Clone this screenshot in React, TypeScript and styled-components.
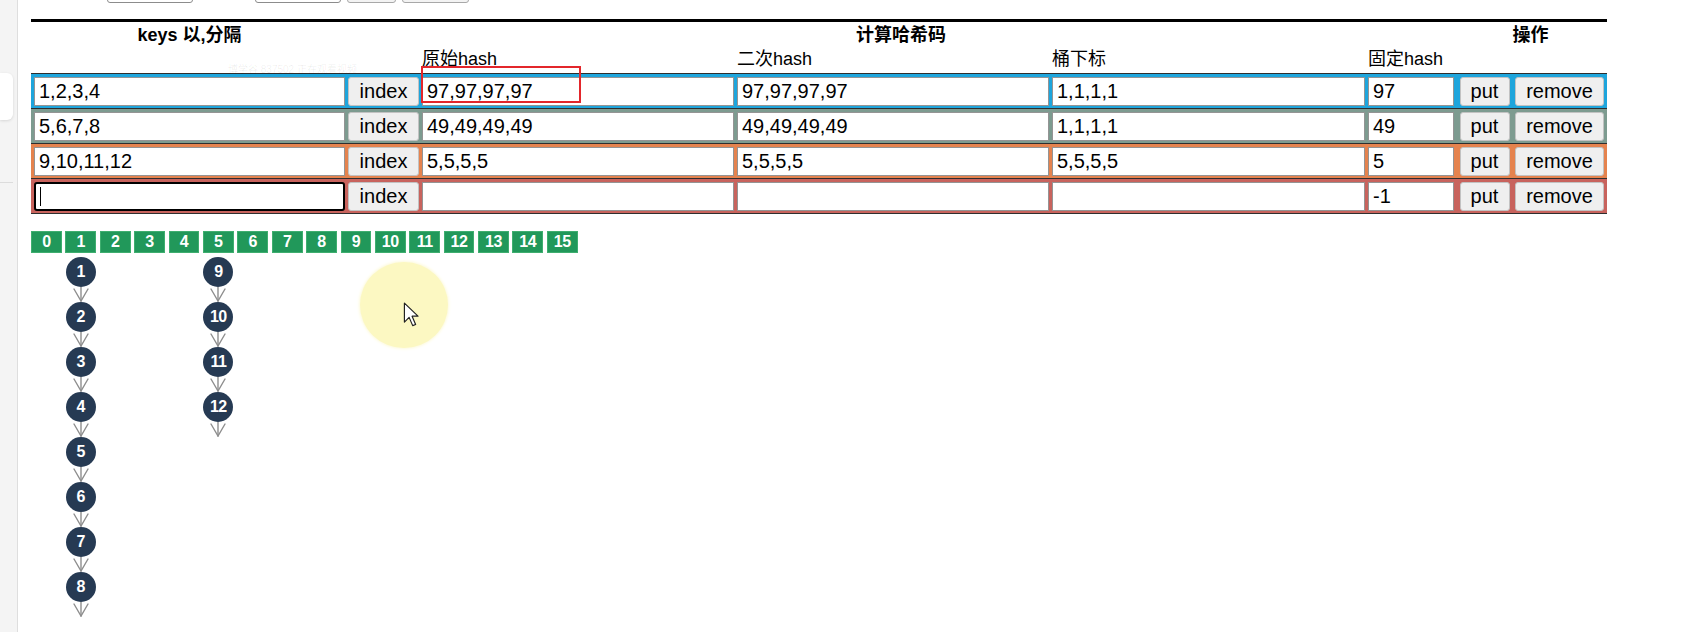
import React from 'react';
import styled, { createGlobalStyle } from 'styled-components';

const GlobalStyle = createGlobalStyle`
  html, body { margin: 0; padding: 0; background: #fff; }
  body {
    font-family: "Liberation Sans", Arial, "Noto Sans CJK SC", sans-serif;
    color: #000;
    overflow: hidden;
  }
  #root { width: 1694px; height: 632px; }
`;

const COLS = '311px 71px 312px 312px 313px 86px 55px 89px';

const Page = styled.div`
  position: relative;
  display: flex;
  width: 1694px;
  height: 632px;
  overflow: hidden;
  background: #fff;
`;

const Sidebar = styled.aside`
  flex: none;
  width: 17px;
  background: #f4f4f4;
  border-right: 1px solid #dedede;
  display: flex;
  flex-direction: column;
  padding-top: 73px;
`;

const SideCard = styled.div`
  width: 13px;
  height: 47px;
  background: #fff;
  border-radius: 0 6px 6px 0;
  box-shadow: 0 1px 3px rgba(0, 0, 0, 0.12);
`;

const SideDivider = styled.div`
  margin-top: 62px;
  width: 13px;
  height: 1px;
  background: #dcdcdc;
`;

const Main = styled.main`
  flex: 1;
  display: flex;
  flex-direction: column;
  padding-left: 13px;
`;

const Toolbar = styled.div`
  height: 3px;
  overflow: hidden;
  display: flex;
  align-items: flex-end;
  gap: 6px;
  padding-left: 76px;
`;

const ToolInput = styled.div<{ $w: number }>`
  flex: none;
  width: ${(p) => p.$w}px;
  height: 22px;
  box-sizing: border-box;
  border: 1px solid #8c8c8c;
  border-radius: 3px;
  background: #fff;
`;

const ToolButton = styled.div<{ $w: number }>`
  flex: none;
  width: ${(p) => p.$w}px;
  height: 22px;
  box-sizing: border-box;
  border: 1px solid #a8a8a8;
  border-radius: 3px;
  background: #f3f3f3;
`;

const ToolLabel = styled.div`
  flex: none;
  width: 50px;
`;

const Table = styled.section`
  margin-top: 16px;
  width: 1576px;
  border-top: 3px solid #000;
  display: flex;
  flex-direction: column;
`;

const HeadRow = styled.div<{ $h: number }>`
  display: grid;
  grid-template-columns: ${COLS};
  column-gap: 3px;
  padding: 0 3px;
  height: ${(p) => p.$h}px;
`;

const GroupTitle = styled.div<{ $col: string }>`
  grid-column: ${(p) => p.$col};
  text-align: center;
  font-size: 18px;
  font-weight: bold;
  line-height: 26px;
`;

const ColLabel = styled.div<{ $col: number }>`
  grid-column: ${(p) => p.$col};
  font-size: 18px;
  line-height: 21px;
  padding-top: 1px;
  white-space: nowrap;
`;

const DataRow = styled.div<{ $color: string; $last?: boolean }>`
  display: grid;
  grid-template-columns: ${COLS};
  column-gap: 3px;
  padding: 3px 3px 2px;
  background: ${(p) => p.$color};
  border-top: 1px solid #2e2e2e;
  border-bottom: ${(p) => (p.$last ? '1px solid #2e2e2e' : 'none')};
  align-items: center;
`;

const FieldWrap = styled.div`
  position: relative;
  height: 29px;
`;

const Field = styled.input<{ $focused?: boolean }>`
  display: block;
  width: 100%;
  height: 29px;
  margin: 0;
  box-sizing: border-box;
  border: ${(p) => (p.$focused ? '2px solid #000' : '1px solid rgba(0,0,0,0.42)')};
  border-radius: ${(p) => (p.$focused ? '3px' : '0')};
  padding: 0 ${(p) => (p.$focused ? '3px' : '4px')};
  background: #fff;
  font-family: "Liberation Sans", Arial, sans-serif;
  font-size: 20px;
  color: #000;
  outline: none;
`;

const Caret = styled.span`
  position: absolute;
  left: 6px;
  top: 5px;
  width: 1px;
  height: 19px;
  background: #000;
`;

const Btn = styled.button<{ $w?: number }>`
  justify-self: center;
  width: ${(p) => (p.$w ? `${p.$w}px` : '100%')};
  height: 29px;
  margin: 0;
  padding: 0;
  box-sizing: border-box;
  background: #efefef;
  border: 1px solid #c2c2c2;
  border-radius: 3px;
  font-family: "Liberation Sans", Arial, sans-serif;
  font-size: 20px;
  color: #000;
`;

const Board = styled.div`
  margin-top: 17px;
  display: flex;
  gap: 3.6px;
  align-items: flex-start;
`;

const BucketColumn = styled.div`
  width: 30.8px;
  display: flex;
  flex-direction: column;
  align-items: center;
`;

const BucketBox = styled.div`
  width: 100%;
  height: 22px;
  box-sizing: border-box;
  background: #21985a;
  border: 1px solid #3fae6f;
  color: #fff;
  font-size: 16px;
  font-weight: bold;
  line-height: 20px;
  text-align: center;
  letter-spacing: -0.4px;
  margin-bottom: 4px;
`;

const Node = styled.div`
  width: 30px;
  height: 30px;
  border-radius: 50%;
  background: #263a53;
  color: #fff;
  font-size: 16px;
  font-weight: bold;
  line-height: 30px;
  text-align: center;
  letter-spacing: -0.5px;
`;

const ArrowSvg = styled.svg`
  display: block;
  width: 30px;
  height: 15px;
`;

const RedMark = styled.div`
  position: absolute;
  left: 421px;
  top: 66px;
  width: 160px;
  height: 37px;
  box-sizing: border-box;
  border: 2px solid #e3262b;
`;

const Watermark = styled.div`
  position: absolute;
  left: 228px;
  top: 61px;
  font-size: 10px;
  color: rgba(0, 0, 0, 0.07);
  white-space: nowrap;
  font-family: "Liberation Sans", "Noto Sans CJK SC", sans-serif;
`;

const Highlight = styled.div`
  position: absolute;
  left: 360px;
  top: 262px;
  width: 88px;
  height: 86px;
  border-radius: 50%;
  background: #fcf8c2;
  box-shadow: 0 0 3px 1px #fdfadb;
`;

const Cursor = styled.svg`
  position: absolute;
  left: 403px;
  top: 302px;
  width: 17px;
  height: 26px;
`;

const rows = [
  { color: '#1ea5dc', key: '1,2,3,4', h1: '97,97,97,97', h2: '97,97,97,97', idx: '1,1,1,1', fixed: '97' },
  { color: '#7d9b90', key: '5,6,7,8', h1: '49,49,49,49', h2: '49,49,49,49', idx: '1,1,1,1', fixed: '49' },
  { color: '#e5834e', key: '9,10,11,12', h1: '5,5,5,5', h2: '5,5,5,5', idx: '5,5,5,5', fixed: '5' },
  { color: '#c8635d', key: '', h1: '', h2: '', idx: '', fixed: '-1', focused: true },
];

const chains: Record<number, number[]> = {
  1: [1, 2, 3, 4, 5, 6, 7, 8],
  5: [9, 10, 11, 12],
};

const Arrow = () => (
  <ArrowSvg viewBox="0 0 30 15">
    <g stroke="#8e8e8e" strokeWidth="1.4" fill="none" strokeLinecap="round">
      <line x1="15" y1="0" x2="15" y2="14" />
      <polyline points="8,2 15,14 22,2" />
    </g>
  </ArrowSvg>
);

export default function App() {
  return (
    <>
      <GlobalStyle />
      <Page>
        <Sidebar>
          <SideCard />
          <SideDivider />
        </Sidebar>
        <Main>
          <Toolbar>
            <ToolInput $w={86} />
            <ToolLabel />
            <ToolInput $w={86} />
            <ToolButton $w={49} />
            <ToolButton $w={67} />
          </Toolbar>
          <Table>
            <HeadRow $h={26}>
              <GroupTitle $col="1">keys 以,分隔</GroupTitle>
              <GroupTitle $col="2 / span 5">计算哈希码</GroupTitle>
              <GroupTitle $col="7 / span 2">操作</GroupTitle>
            </HeadRow>
            <HeadRow $h={25}>
              <ColLabel $col={3}>原始hash</ColLabel>
              <ColLabel $col={4}>二次hash</ColLabel>
              <ColLabel $col={5}>桶下标</ColLabel>
              <ColLabel $col={6}>固定hash</ColLabel>
            </HeadRow>
            {rows.map((r, i) => (
              <DataRow key={i} $color={r.color} $last={i === rows.length - 1}>
                <FieldWrap>
                  <Field readOnly value={r.key} $focused={r.focused} />
                  {r.focused && <Caret />}
                </FieldWrap>
                <Btn>index</Btn>
                <Field readOnly value={r.h1} />
                <Field readOnly value={r.h2} />
                <Field readOnly value={r.idx} />
                <Field readOnly value={r.fixed} />
                <Btn $w={50}>put</Btn>
                <Btn>remove</Btn>
              </DataRow>
            ))}
          </Table>
          <Board>
            {Array.from({ length: 16 }, (_, b) => (
              <BucketColumn key={b}>
                <BucketBox>{b}</BucketBox>
                {(chains[b] || []).map((n) => (
                  <React.Fragment key={n}>
                    <Node>{n}</Node>
                    <Arrow />
                  </React.Fragment>
                ))}
              </BucketColumn>
            ))}
          </Board>
        </Main>
        <Watermark>博学谷 837502 正在观看视频</Watermark>
        <RedMark />
        <Highlight />
        <Cursor viewBox="0 0 14 22">
          <path d="M1 1 L1 17 L5 13 L8 20 L10.5 19 L7.5 12 L12.5 12 Z" fill="#fff" stroke="#222" strokeWidth="1" strokeLinejoin="round" />
        </Cursor>
      </Page>
    </>
  );
}
